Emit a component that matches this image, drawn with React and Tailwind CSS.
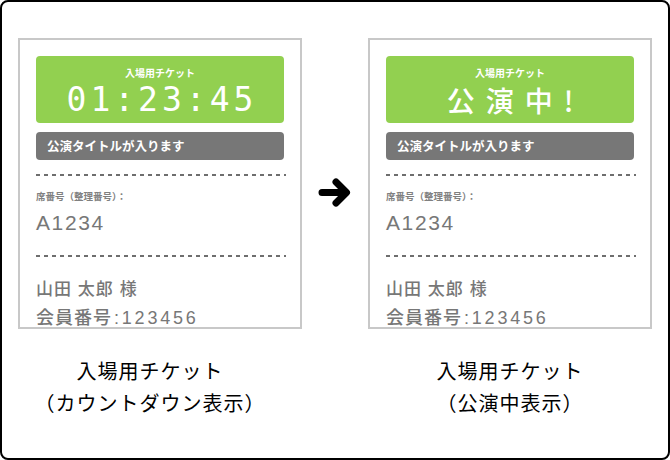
import React from 'react';

const jp = "font-['Noto_Sans_CJK_JP',sans-serif]";
const latin = "font-['Liberation_Sans','Noto_Sans_CJK_JP',sans-serif]";

function Dashed() {
    return <div className="h-[2px] w-[250px] bg-[repeating-linear-gradient(to_right,#6e6e6e_0_4px,transparent_4px_8px)]" />;
}

function Arrow() {
    return (
        <svg width="34" height="35" viewBox="0 0 34 35" fill="none">
            <path d="M4 17.5 H28 M18 7 L28.5 17.5 L18 28" stroke="#000" strokeWidth="7" strokeLinecap="round" strokeLinejoin="round" />
        </svg>
    );
}

function Ticket({ children }) {
    return (
        <div className="w-[284px] h-[291px] border-2 border-[#c8c8c8] bg-white overflow-hidden px-4 pt-4">
            <div className="h-[67px] rounded-[4px] bg-[#92d050] text-white flex flex-col items-center">
                <p className={`${jp} mt-[10px] text-[10px] leading-[14px] font-bold`}>入場用チケット</p>
                {children}
            </div>
            <div className={`${jp} mt-[9px] h-[28px] rounded-[4px] bg-[#777777] text-white text-[12.5px] font-bold flex items-center pl-[11px]`}>
                公演タイトルが入ります
            </div>
            <div className="mt-[14px]">
                <Dashed />
            </div>
            <p className={`${jp} mt-[14px] text-[9.5px] leading-[12px] font-bold text-[#808080]`}>席番号（整理番号）：</p>
            <p className={`${latin} mt-[9px] text-[21px] leading-[24px] tracking-[1.6px] text-[#777777]`}>A1234</p>
            <div className="mt-[20px]">
                <Dashed />
            </div>
            <p className={`${jp} mt-[19px] text-[17px] leading-[24px] font-medium tracking-[1px] text-[#777777] [word-spacing:1px]`}>
                山田 太郎 様
            </p>
            <p className={`${latin} mt-[4px] text-[18px] leading-[24px] font-medium text-[#777777]`}>
                <span className={`${jp} tracking-[1px]`}>会員番号</span>
                <span className="tracking-[2.8px] ml-[2px]">:123456</span>
            </p>
        </div>
    );
}

function Caption({ lines, className = '' }) {
    return (
        <div className={`${jp} mt-[26px] text-[20px] leading-[32px] tracking-[1px] text-black text-center ${className}`}>
            {lines.map((l) => (
                <p key={l}>{l}</p>
            ))}
        </div>
    );
}

export default function App() {
    return (
        <div className="w-[670px] h-[460px] bg-white border-2 border-black rounded-[8px] flex px-4 pt-[36px]">
            <div className="w-[284px] flex flex-col">
                <Ticket>
                    <p className="mt-[2px] font-['DejaVu_Sans_Mono',monospace] text-[33px] leading-[36px] tracking-[4px] pl-[4px]">
                        01:23:45
                    </p>
                </Ticket>
                <Caption lines={['入場用チケット', '（カウントダウン表示）']} className="pr-[20px]" />
            </div>
            <div className="w-[66px] flex justify-center pt-[137px]">
                <Arrow />
            </div>
            <div className="w-[284px] flex flex-col">
                <Ticket>
                    <p className={`${jp} mt-[3px] text-[28px] leading-[34px] font-medium tracking-[11px] pl-[11px]`}>
                        公演中!
                    </p>
                </Ticket>
                <Caption lines={['入場用チケット', '（公演中表示）']} />
            </div>
        </div>
    );
}
